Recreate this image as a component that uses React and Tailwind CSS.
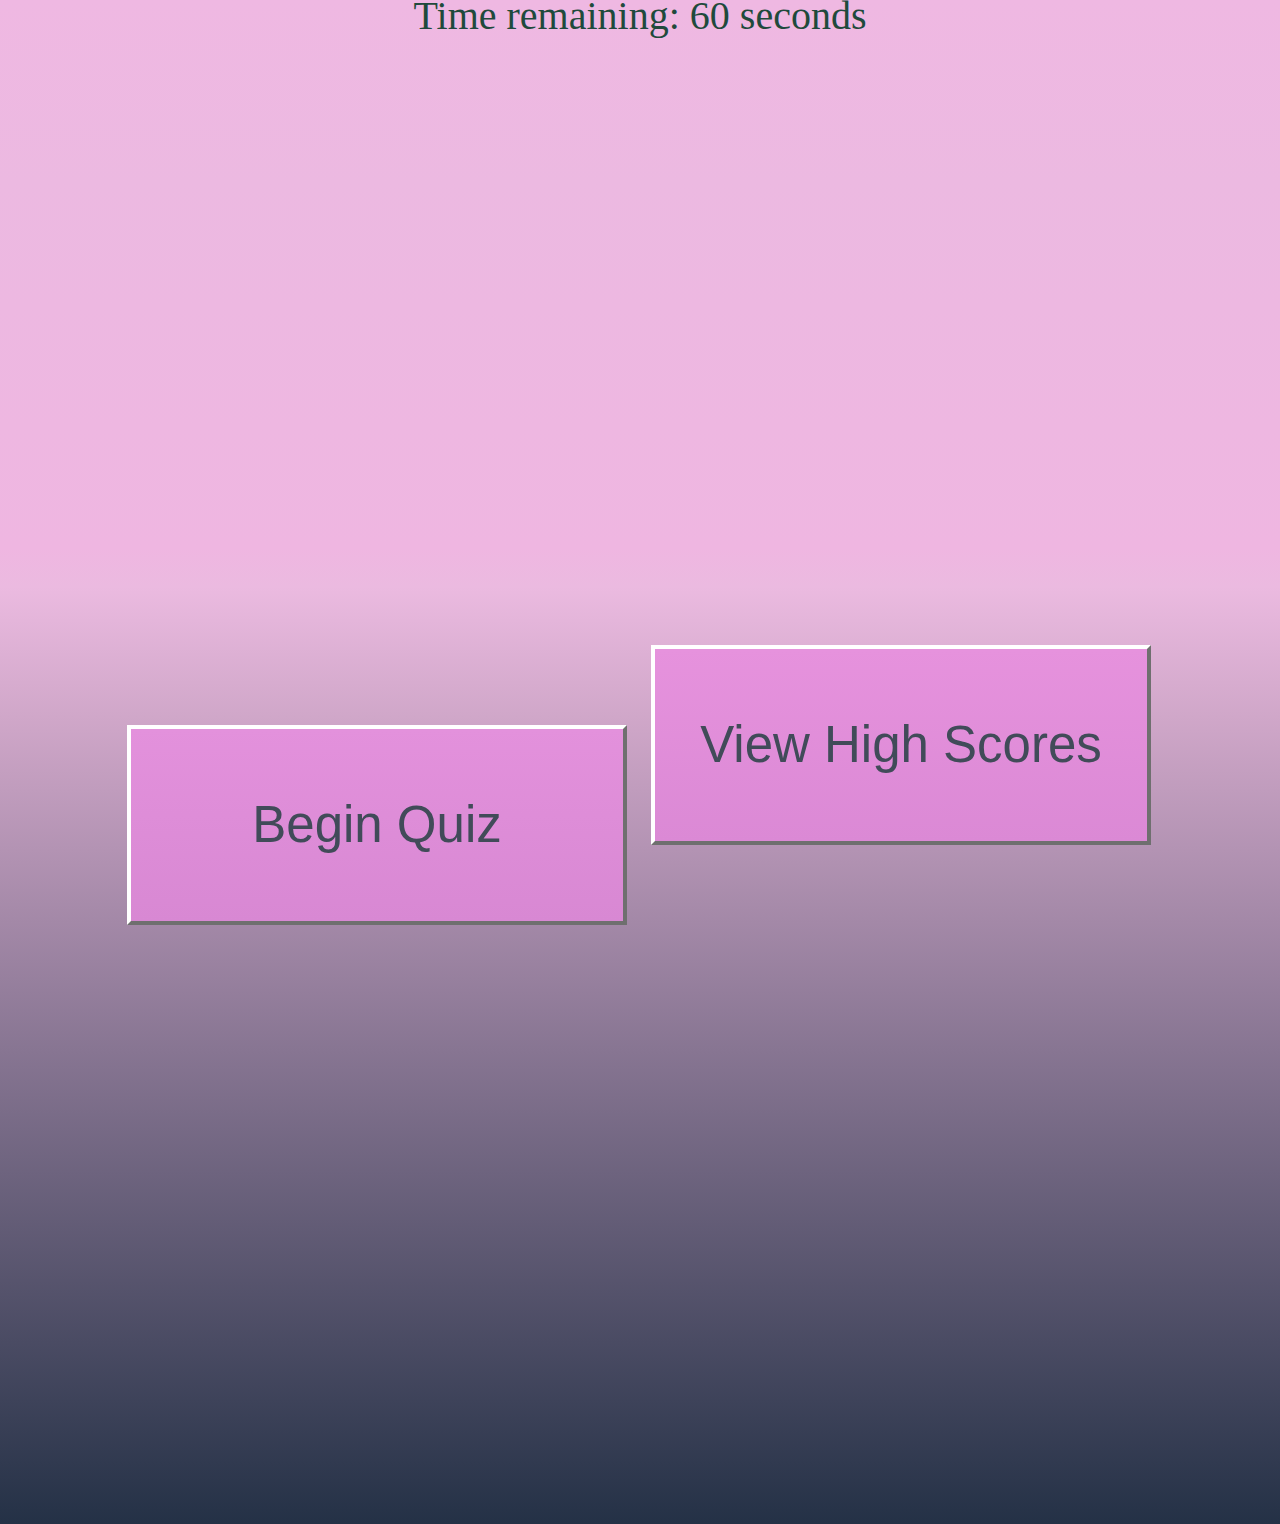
export default function App() {
    return (
        <div className="min-h-[1524px] w-full bg-[linear-gradient(to_bottom,#efb8e2_0%,#ecb9e1_12%,#efb6e1_36%,#ebbae0_38.5%,#d0a7c9_47%,#877592_69%,#243146_100%)] flex flex-col">
            <h1 className="-mt-[7px] text-center text-[40px] leading-[1.15] text-[#1f4a3c] font-['Liberation_Serif',serif]">
                Time remaining: 60 seconds
            </h1>

            <div className="mt-[606px] pl-[127px] flex items-start gap-[24px]">
                <button className="mt-[80px] w-[500px] h-[200px] border-4 border-t-white border-l-white border-r-[#6f6f6f] border-b-[#6f6f6f] bg-[linear-gradient(to_bottom,#e391dc,#d888d3)] text-[51px] text-[#414b59] font-['Liberation_Sans',sans-serif]">
                    Begin Quiz
                </button>
                <button className="w-[500px] h-[200px] border-4 border-t-white border-l-white border-r-[#6f6f6f] border-b-[#6f6f6f] bg-[linear-gradient(to_bottom,#e692dd,#db89d5)] text-[51px] text-[#414b59] font-['Liberation_Sans',sans-serif]">
                    View High Scores
                </button>
            </div>
        </div>
    )
}
